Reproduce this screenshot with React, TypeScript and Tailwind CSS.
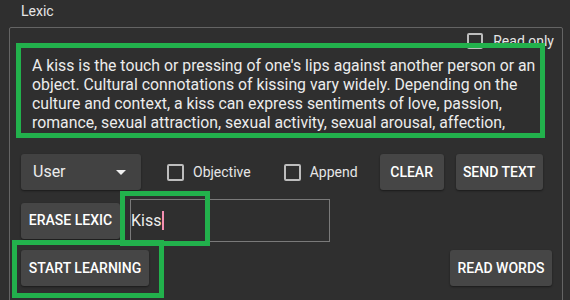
import React from "react";

const Check = ({ label, className = "" }: { label: string; className?: string }) => (
  <label className={`flex items-center ${className}`}>
    <span className="w-[17px] h-[17px] border-2 border-[#bdbdbd] rounded-[2px]" />
    <span className="ml-[9px] text-[14px] text-[#e6e6e6]">{label}</span>
  </label>
);

const Btn = ({ children, className = "" }: { children: React.ReactNode; className?: string }) => (
  <button className={`h-[36px] bg-[#464646] rounded-[3px] shadow-[0_1px_2px_rgba(0,0,0,0.45)] text-white text-[14px] font-medium flex items-center justify-center ${className}`}>
    {children}
  </button>
);

const lines = [
  "A kiss is the touch or pressing of one's lips against another person or an",
  "object. Cultural connotations of kissing vary widely. Depending on the",
  "culture and context, a kiss can express sentiments of love, passion,",
  "romance, sexual attraction, sexual activity, sexual arousal, affection,",
];

export default function App() {
  return (
    <div className="relative w-[570px] h-[300px] overflow-hidden bg-[#2f2f2f] font-['Roboto',sans-serif] text-[#e6e6e6]">
      <div className="h-[27px] pl-[21px] pt-[3px] text-[14px] leading-[16px]">Lexic</div>

      <div className="ml-[9px] w-[554px] h-[300px] border border-[#646464] rounded-t-[2px]">
        <div className="flex justify-end pr-[8px] pt-[5px]">
          <label className="flex items-center h-[16px]">
            <span className="w-[16px] h-[16px] border-2 border-[#bdbdbd] rounded-[2px]" />
            <span className="ml-[10px] text-[14px]">Read only</span>
          </label>
        </div>

        <div className="mt-[7px] pl-[22px] text-[15.8px] leading-[19px] text-[#ececec]">
          {lines.map((l) => (
            <div key={l} className="whitespace-nowrap">{l}</div>
          ))}
        </div>

        <div className="flex items-center mt-[22px] pl-[11px]">
          <div className="w-[120px] h-[36px] bg-[#424242] rounded-[3px] shadow-[0_1px_2px_rgba(0,0,0,0.45)] flex items-center justify-between pl-[12px] pr-[15px]">
            <span className="text-[16px] text-[#ececec]">User</span>
            <svg width="10" height="5" viewBox="0 0 10 5">
              <polygon points="0,0 10,0 5,5" fill="#f0f0f0" />
            </svg>
          </div>
          <Check label="Objective" className="ml-[26px]" />
          <Check label="Append" className="ml-[33px]" />
          <Btn className="ml-[22px] w-[64px]">CLEAR</Btn>
          <Btn className="ml-[12px] w-[87px]">SEND TEXT</Btn>
        </div>

        <div className="flex items-center mt-[9px] pl-[11px]">
          <Btn className="w-[99px]">ERASE LEXIC</Btn>
          <div className="ml-[10px] w-[200px] h-[43px] border border-[#7a7a7a] flex items-center">
            <span className="text-[16px] text-[#ececec]">Kiss</span>
            <span className="ml-[1px] w-[2px] h-[19px] bg-[#f48fb1]" />
          </div>
        </div>

        <div className="flex items-center justify-between mt-[8px] pl-[11px] pr-[10px]">
          <Btn className="w-[128px]">START LEARNING</Btn>
          <Btn className="w-[102px]">READ WORDS</Btn>
        </div>
      </div>

      <div className="absolute left-[16px] top-[43px] w-[529px] h-[95px] border-[5px] border-[#22b14c]" />
      <div className="absolute left-[120px] top-[191px] w-[90px] h-[55px] border-[5px] border-[#22b14c]" />
      <div className="absolute left-[12px] top-[240px] w-[152px] h-[58px] border-[5px] border-[#22b14c]" />
    </div>
  );
}
